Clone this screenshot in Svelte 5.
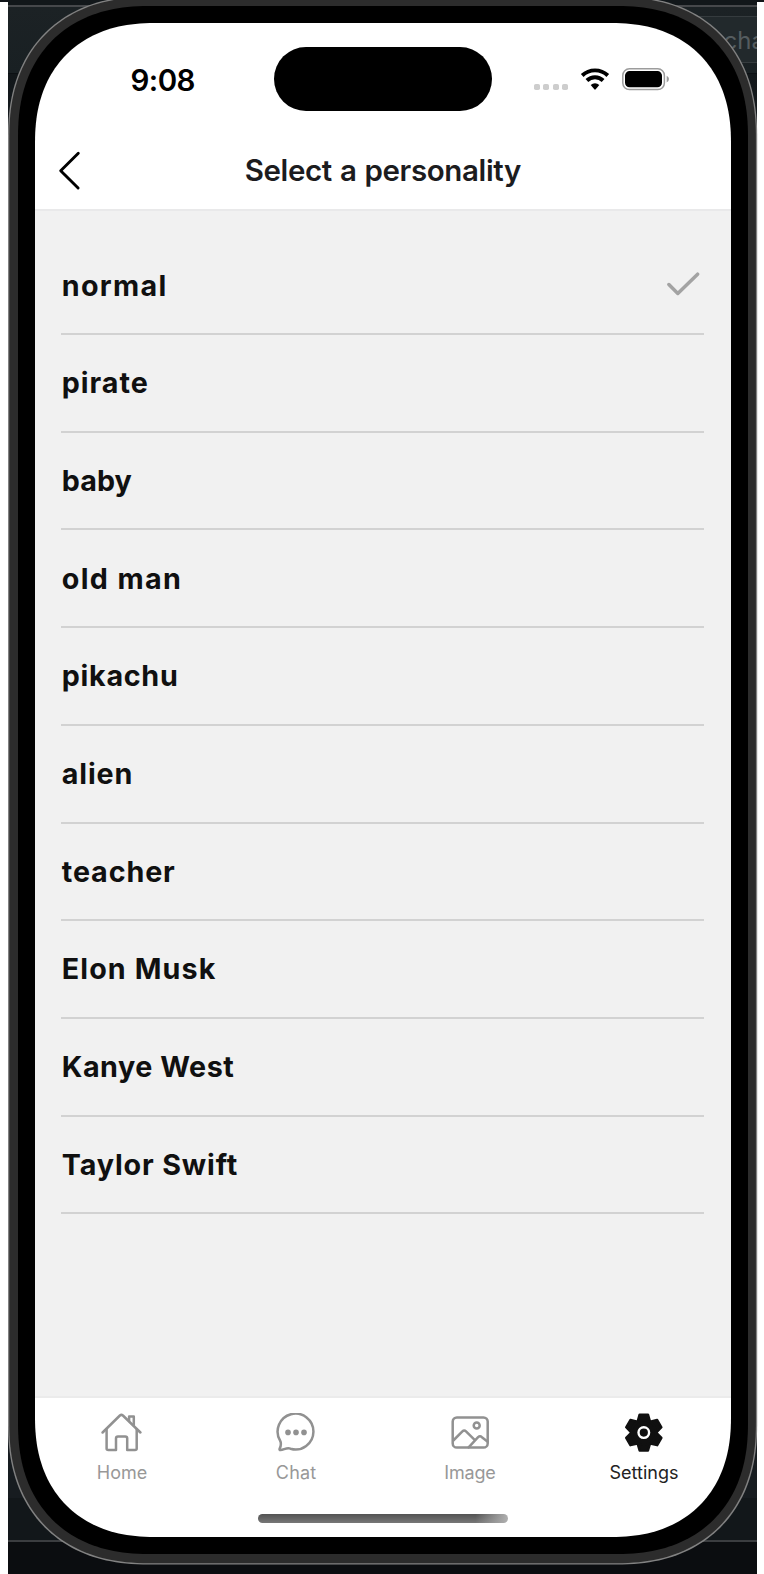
<script>
  const people = [
    ['normal', 104.5], ['pirate', 86], ['baby', 70], ['old man', 119],
    ['pikachu', 116], ['alien', 70.5], ['teacher', 113], ['Elon Musk', 153.5],
    ['Kanye West', 172], ['Taylor Swift', 175.5],
  ];
  let selected = $state('normal');

  const tabs = [
    ['Home', 50.5], ['Chat', 40.5], ['Image', 51.5], ['Settings', 69],
  ];

  // Spaces the letters so that the text fills the given width.
  function fit(node, width) {
    const apply = () => {
      node.style.letterSpacing = '0px';
      const own = node.getBoundingClientRect().width;
      const gap = (width - own) / (node.textContent.length - 1);
      node.style.letterSpacing = gap + 'px';
      node.style.marginRight = -gap + 'px';
    };
    apply();
    document.fonts?.ready.then(apply);
  }

  // Rectangle with superellipse corners that reach `a` pixels along each side.
  function smooth(x, y, w, h, a, n = 2.3) {
    const quarter = [];
    for (let i = 0; i <= 48; i++) {
      const t = (i / 48) * (Math.PI / 2);
      quarter.push([a - a * Math.cos(t) ** (2 / n), a - a * Math.sin(t) ** (2 / n)]);
    }
    const back = [...quarter].reverse();
    const points = [
      ...quarter.map(([u, v]) => [x + u, y + v]),
      ...back.map(([u, v]) => [x + w - u, y + v]),
      ...quarter.map(([u, v]) => [x + w - u, y + h - v]),
      ...back.map(([u, v]) => [x + u, y + h - v]),
    ];
    return 'M' + points.map(([u, v]) => `${u.toFixed(2)} ${v.toFixed(2)}`).join(' L') + 'Z';
  }
  const bezel = smooth(18, 6, 730, 1548, 132);
  const edge = smooth(9.3, -2.8, 746.6, 1566, 141);
  const outer = smooth(8, -4, 749.2, 1568.6, 142);
  const screen = smooth(0, 0, 696, 1514, 121);
</script>

<div class="stage">
  <div class="desk">
    <div class="toolbar"><div class="field">cha</div></div>
    <div class="desk-mid"></div>
    <div class="desk-low"></div>
    <div class="desk-foot"></div>
  </div>

  <svg class="layer" width="764" height="1574" viewBox="0 0 764 1574">
    <path d={outer} fill="#828282" />
    <path d={edge} fill="#2c2c2c" />
    <path d={bezel} fill="#000" />
  </svg>

  <div class="screen" style:clip-path={`path("${screen}")`}>
    <div class="status">
      <div class="time"><span use:fit={65}>9:08</span></div>
      <div class="island"></div>
      <div class="signals">
        <div class="cells"><i></i><i></i><i></i><i></i></div>
        <svg class="wifi" width="30" height="24" viewBox="0 0 30 24">
          <g fill="none" stroke="#000" stroke-width="3.9">
            <path d="M2.2 8.5A18.5 18.5 0 0 1 27.8 8.5" />
            <path d="M6.9 13.5A11.6 11.6 0 0 1 23.1 13.5" />
          </g>
          <path d="M10.7 18A6.3 6.3 0 0 1 19.3 18L15.7 22.3Q15 23 14.3 22.3Z" />
        </svg>
        <svg class="battery" width="48" height="24" viewBox="0 0 48 24">
          <rect x=".8" y="1.8" width="41.6" height="20.8" rx="6.6" fill="none" stroke="#9c9c9c" stroke-width="1.5" />
          <rect x="3" y="4.1" width="37" height="16.2" rx="4.6" />
          <path d="M44.7 8.8Q47 9.9 47 12.1Q47 14.3 44.7 15.4Z" fill="#9c9c9c" />
        </svg>
      </div>
    </div>

    <header>
      <svg class="back" width="24" height="42" viewBox="0 0 24 42">
        <path d="M20.3 3.2L2.7 20.8L20.1 38" fill="none" stroke="#000" stroke-width="2.9" stroke-linecap="round" stroke-linejoin="round" />
      </svg>
      <h1><span use:fit={276.5}>Select a personality</span></h1>
    </header>

    <main>
      {#each people as [name, width]}
        <button class="row" onclick={() => (selected = name)}>
          <span use:fit={width}>{name}</span>
          {#if selected === name}
            <svg width="36" height="26" viewBox="0 0 36 26">
              <path d="M3.9 12.6L12.8 21.5L32.6 2.2" fill="none" stroke="#a3a3a3" stroke-width="3.5" stroke-linecap="round" stroke-linejoin="round" />
            </svg>
          {/if}
        </button>
      {/each}
    </main>

    <nav>
      {#each tabs as [name, width], i}
        <div class="tab" class:active={i === 3}>
          <svg width="42" height="42" viewBox="0 0 42 42" fill="none" stroke="#919191" stroke-width="2.5" stroke-linecap="round" stroke-linejoin="round">
            {#if name === 'Home'}
              <path d="M1.6 19.5L18.9 2.5Q20.4 1.2 21.9 2.5L39.4 19.5" />
              <path d="M5.6 16.5V35.5Q5.6 37 7.3 37H15V25.5Q15 23.5 17 23.5H24.2Q26.2 23.5 26.2 25.5V37H34Q35.7 37 35.7 35.5V16.5" />
              <path d="M28.1 7.8V3.5H32.8V12.3" />
            {:else if name === 'Chat'}
              <g transform="translate(0 -.6)">
                <path d="M5.1 28.2A17.9 17.9 0 1 1 15.5 36.3C12 34.9 9 37.4 5.5 37.7Q4.2 37.7 4.6 36.4C6 33.5 6.7 31.3 5.1 28.2Z" />
                <g fill="#919191" stroke="none"><circle cx="13" cy="20" r="2.8" /><circle cx="21" cy="20" r="2.8" /><circle cx="29" cy="20" r="2.8" /></g>
              </g>
            {:else if name === 'Image'}
              <g transform="translate(0 -.8)">
                <rect x="3.7" y="5.2" width="35" height="30.2" rx="4.2" />
                <circle cx="27.7" cy="13.3" r="3" />
                <path d="M4.3 28.3L13.4 19.2Q15.2 17.4 17 19.2L25.4 27.4M19.6 35.2L29.1 25Q31 23.2 32.9 25L38.4 29.4" />
              </g>
            {:else}
              <g fill="#101010" stroke="#101010" stroke-width="2.4" transform="translate(-.2 -1.4)">
                {#each [0, 60, 120, 180, 240, 300] as angle}
                  <path d="M14.8 10L16.8 3.1H25.2L27.2 10L21 21Z" transform={`rotate(${angle} 21 21)`} />
                {/each}
                <circle cx="21" cy="21" r="12.2" />
                <circle cx="21" cy="21" r="5.3" stroke="#fff" />
              </g>
            {/if}
          </svg>
          <span class="label"><span use:fit={width}>{name}</span></span>
        </div>
      {/each}
    </nav>
    <div class="home-bar"></div>
  </div>
</div>

<style>
  :global(body) { margin: 0; background: #fff; }
  .stage {
    position: relative;
    width: 764px;
    height: 1574px;
    overflow: hidden;
    background: linear-gradient(#111519 0 2px, #fff 2px);
    font-family: Inter, "Liberation Sans", sans-serif;
  }
  .desk {
    display: flex;
    flex-direction: column;
    width: 749px;
    height: 1574px;
    margin-left: 8px;
    background: #12171a;
  }
  .toolbar {
    height: 66px;
    margin-top: 5px;
    border-top: 2px solid #46484b;
    border-bottom: 1px solid #0c1013;
    background: linear-gradient(#1c2225, #192023);
    display: flex;
    justify-content: flex-end;
    align-items: flex-start;
  }
  .field {
    width: 33.5px;
    height: 45px;
    margin-top: 9px;
    padding-left: 90px;
    border: solid #353b3e;
    border-width: 1px 0;
    font-size: 24px;
    line-height: 47px;
    color: #555c5f;
    background: #22292c;
    overflow: hidden;
  }
  .desk-mid { flex: 1; background: linear-gradient(#12171a, #171c20 85px, #171c20); }
  .desk-low { height: 42px; background: #12171a; border-bottom: 2px solid #3b3d40; }
  .desk-foot { height: 32px; background: #0b0d10; }
  .layer { position: absolute; inset: 0; }
  .screen {
    position: absolute;
    left: 35px;
    top: 23px;
    width: 696px;
    height: 1514px;
    background: #fff;
    display: flex;
    flex-direction: column;
  }
  .status {
    height: 110px;
    display: grid;
    grid-template-columns: 239px 218px 1fr;
    align-items: start;
  }
  .time {
    padding: 38px 0 0 95.5px;
    font-size: 29.5px;
    font-weight: 600;
    line-height: 38px;
    color: #000;
  }
  .time span, h1 span, .row span, .label span { display: inline-block; white-space: pre; }
  .island { height: 64px; margin-top: 24px; border-radius: 32px; background: #000; }
  .signals { display: flex; padding: 44px 0 0 42px; }
  .cells { display: flex; gap: 3.3px; padding-top: 17px; }
  .cells i { width: 6px; height: 6px; border-radius: 1.8px; background: #cdcdcd; }
  .wifi { margin-left: 12px; }
  .battery { margin-left: 12.3px; }
  header {
    height: 78px;
    flex: none;
    border-bottom: 2px solid #e9e9ea;
    box-sizing: border-box;
    display: grid;
    grid-template-columns: 60px 1fr 60px;
  }
  .back { margin: 17px 0 0 23px; }
  h1 {
    margin: 19px 0 0;
    text-align: center;
    font-size: 29.5px;
    font-weight: 600;
    line-height: 37px;
    word-spacing: 1px;
    color: #1c1c1e;
  }
  main {
    height: 1187px;
    box-sizing: border-box;
    padding: 26.4px 26.8px 0 26.2px;
    background: #f1f1f1;
    border-bottom: 2px solid #ebebeb;
    flex: none;
  }
  .row {
    display: flex;
    justify-content: space-between;
    align-items: flex-start;
    width: 100%;
    height: 97.7px;
    box-sizing: border-box;
    padding: 30.2px 3.3px 0 .6px;
    border: 0;
    border-bottom: 2px solid #d2d2d2;
    background: none;
    font: 700 28.7px/36px Inter, "Liberation Sans", sans-serif;
    color: #101010;
    text-align: left;
  }
  .row svg { margin-top: 4.5px; }
  nav { display: grid; grid-template-columns: repeat(4, 1fr); height: 100px; }
  .tab { display: flex; flex-direction: column; align-items: center; padding-top: 15px; }
  .label {
    margin-top: 6px;
    font-size: 18px;
    line-height: 24px;
    color: #989898;
  }
  .active .label { color: #222; }
  .home-bar {
    width: 249.5px;
    height: 9px;
    margin: 16px 0 0 223px;
    border-radius: 5px;
    background: linear-gradient(90deg, transparent 87%, #b0b0b0), linear-gradient(#535353, #777);
  }
</style>
